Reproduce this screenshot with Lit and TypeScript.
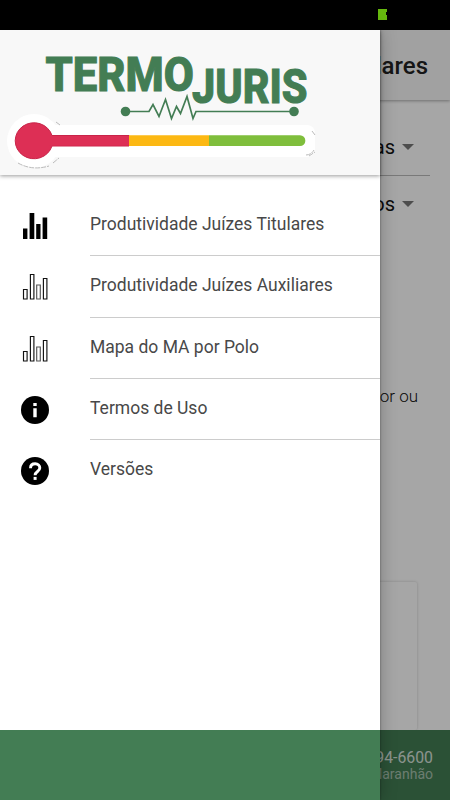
import { LitElement, html, css, svg } from "lit";
import { customElement, property } from "lit/decorators.js";

@customElement("menu-icon")
class MenuIcon extends LitElement {
  @property() name = "outline";
  static styles = css`
    :host { display: block; width: 28px; height: 28px; }
    svg { display: block; }
  `;
  shape() {
    if (this.name === "solid")
      return svg`<path d="M2 16.500h4.400V27H2zM8.600 1h4.700v26H8.600zM15.200 12h4.300v15h-4.300zM21.600 5.500h4.600V27h-4.600z"/>`;
    if (this.name === "outline")
      return svg`<g fill="none" stroke="#111" stroke-width="1.150"><path d="M2.500 16.500h3.600v9.500h-3.600zM9.400 1.500h3.500v24.500h-3.500zM22.400 5.500h3.500v20.500h-3.500z"/><path stroke="#555" d="M15.700 12h3.600v14h-3.600z"/></g>`;
    if (this.name === "info")
      return svg`<circle cx="14" cy="14" r="14"/><path fill="#fff" d="M12.300 7h3.400v3h-3.400zM12.300 12.300h3.400v9h-3.400z"/>`;
    return svg`<circle cx="14" cy="14" r="14"/><path fill="none" stroke="#fff" stroke-width="2.900" d="M9.500 11.300C9.500 8.500 11.400 6.800 14.200 6.800s4.600 1.800 4.600 4.300c0 3.400-4.700 3.400-4.700 7.100"/><path fill="#fff" d="M12.600 19.900h3v3h-3z"/>`;
  }
  render() {
    return html`<svg width="28" height="28" viewBox="0 0 28 28">${this.shape()}</svg>`;
  }
}

@customElement("termo-logo")
class TermoLogo extends LitElement {
  static styles = css`
    :host { display: block; }
    svg { display: block; }
    text { font: 800 48.500px Roboto, sans-serif; fill: #437d54; stroke: #437d54; stroke-width: 1.100px; }
  `;
  render() {
    return html`<svg width="380" height="145" viewBox="0 30 380 145">
      <g fill="#fff"><circle cx="34" cy="141" r="27"/><rect x="30" y="125" width="285" height="32" rx="8"/></g>
      <path d="M18 163q14 8 31 3M53 163l6-5M56 122l4 3M306 155q5 0 8-5M309 156l6-4M312 131l3 4" fill="none" stroke="#bbb" stroke-dasharray="5 1"/>
      <path fill="#dd2f55" stroke="#c92449" d="M52 135.500A18.800 18 0 1 0 52 146H129V135.500z"/>
      <path fill="#dd2f55" d="M49 136h80v9.500H49z"/>
      <path fill="#fcb813" d="M129 135.300h80V146h-80z"/>
      <path fill="#7fbe3c" d="M209 135.300h91a5.300 5.300 0 0 1 0 10.700h-91z"/>
      <text x="45.500" y="91" textLength="148.500" lengthAdjust="spacingAndGlyphs">TERMO</text>
      <text x="192" y="103" textLength="115.500" lengthAdjust="spacingAndGlyphs">JURIS</text>
      <g fill="#437d54"><circle cx="125.500" cy="111.500" r="4.800"/><circle cx="294" cy="111.500" r="4.800"/></g>
      <path fill="none" stroke="#437d54" stroke-width="1.700" d="M126 111.500h23l4-7 6 12 6.500-17 6 19 5-12 4 7 6.500-17 6 22 3-7h98"/>
    </svg>`;
  }
}

@customElement("app-root")
class AppRoot extends LitElement {
  items = [
    ["solid", "Produtividade Juízes Titulares"],
    ["outline", "Produtividade Juízes Auxiliares"],
    ["outline", "Mapa do MA por Polo"],
    ["info", "Termos de Uso"],
    ["help", "Versões"],
  ];
  static styles = css`
    :host { display: flex; flex-direction: column; position: relative; width: 450px; height: 800px; overflow: hidden; background: #fff; font-family: Roboto, sans-serif; }
    * { box-sizing: border-box; }
    .status { height: 30px; flex: none; background: #000; display: flex; justify-content: flex-end; padding: 9px 62px 0 0; }
    .main { flex: 1; display: flex; flex-direction: column; }
    .bar { height: 70px; display: flex; align-items: center; justify-content: flex-end; padding: 1px 22px 0 0; background: #f8f8f8; font-size: 24px; font-weight: 500; color: #222; box-shadow: 0 1px 3px #0005; }
    .content { flex: 1; padding: 19px 20px 0; display: flex; flex-direction: column; }
    .select { height: 55px; display: flex; align-items: center; justify-content: flex-end; gap: 7px; padding-right: 16px; font-size: 20px; color: #111; }
    .select.first { border-bottom: 1px solid #bbb; height: 57px; }
    .arrow { border: 6px solid transparent; border-top-color: #777; border-bottom: 0; }
    .note { margin-top: 153px; height: 24px; line-height: 24px; text-align: right; padding-right: 12px; font-size: 17px; font-weight: 300; color: #111; }
    .card { margin: 174px 13px 0 0; flex: 1; border-radius: 2px; box-shadow: 0 0 3px #0003; }
    .footer { height: 70px; background: #437d54; color: #fffc; padding: 19px 17px 0 0; text-align: right; font-size: 15.800px; line-height: 17px; position: relative; }
    .sub { font-size: 14px; line-height: 16px; color: #ffffff88; }
    .shade { position: absolute; inset: 30px 0 0 0; background: #00000059; }
    .drawer { position: absolute; left: 0; top: 30px; bottom: 0; width: 380px; background: #fff; display: flex; flex-direction: column; box-shadow: 0 0 16px #0004, 0 0 2px #0006; }
    .head { height: 145px; background: #f8f8f8; box-shadow: 0 1px 4px #0006; }
    .list { padding-top: 20px; flex: 1; }
    .item { height: 61.250px; display: flex; padding-left: 21px; }
    .item menu-icon { margin: 17px 41px 0 0; }
    .label { flex: 1; border-bottom: 1px solid #ccc; font-size: 17.500px; line-height: 58px; color: #484848; white-space: nowrap; }
    .item:last-child .label { border: 0; }
    .base { height: 70px; background: #437d54; }
  `;
  render() {
    return html`
      <div class="status"><svg width="10" height="12"><path fill="#66b80e" d="M0 0h9v3H8v3h1v5H0z"/></svg></div>
      <div class="main">
        <div class="bar">Titulares</div>
        <div class="content">
          <div class="select first">Todas<i class="arrow"></i></div>
          <div class="select">Todos<i class="arrow"></i></div>
          <div class="note">por ou</div>
          <div class="card"></div>
        </div>
        <div class="footer">94-6600<div class="sub">Maranhão</div></div>
      </div>
      <div class="shade"></div>
      <div class="drawer">
        <div class="head"><termo-logo></termo-logo></div>
        <div class="list">
          ${this.items.map(([icon, text]) => html`<div class="item"><menu-icon name=${icon}></menu-icon><div class="label">${text}</div></div>`)}
        </div>
        <div class="base"></div>
      </div>`;
  }
}
